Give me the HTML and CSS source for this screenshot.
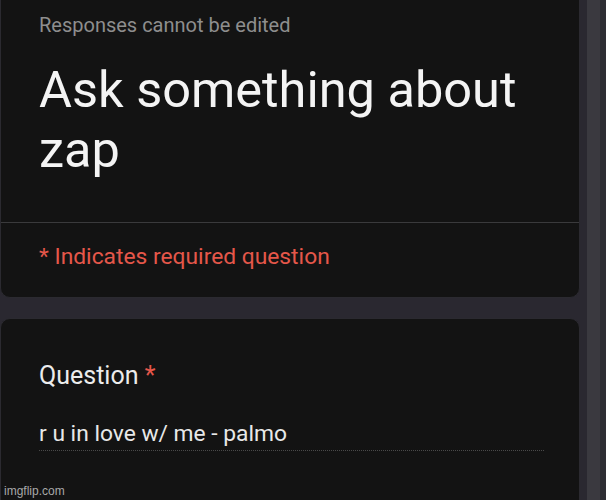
FILE: index.html
```html
<!DOCTYPE html>
<html lang="en">
  <head>
    <meta charset="UTF-8" />
    <meta name="viewport" content="width=device-width, initial-scale=1.0" />
    <title>Ask something about zap</title>
    <link rel="stylesheet" href="styles.css">
  </head>
  <body>
    <div class="screen">
      <div class="main">
        <div class="card card-top">
          <div class="form-head">
            <div class="note">Responses cannot be edited</div>
            <h1 class="title">Ask something about zap</h1>
          </div>
          <div class="required-note">* Indicates required question</div>
        </div>

        <div class="card card-question">
          <div class="question-label">Question <span class="star">*</span></div>
          <div class="answer">r u in love w/ me - palmo</div>
        </div>
      </div>
      <div class="scrollbar"></div>
      <div class="edge"></div>
    </div>
    <div class="watermark">imgflip.com</div>
  </body>
</html>
```

FILE: styles.css
```css
body {
  font-family: "Roboto", "Noto Sans", sans-serif;
  background-color: #2a2830;
  margin: 0;
  padding: 0;
  height: 500px;
  overflow: hidden;
  position: relative;
}

.screen {
  display: flex;
  height: 500px;
}

.main {
  flex: 1;
  padding-right: 7px;
}

.scrollbar {
  width: 13px;
  background-color: #3a393f;
}

.edge {
  width: 6px;
  background-color: #2e2d33;
}

.card {
  background-color: #131313;
  border: 1px solid #2b2a30;
  border-radius: 10px;
}

.card-top {
  margin-top: -12px;
}

.form-head {
  padding: 24px 38px 42px;
  border-bottom: 1px solid #3a3a3c;
}

.note {
  font-size: 20px;
  line-height: 24px;
  color: #8e8e8e;
}

.title {
  margin: 23px 0 0;
  font-size: 50.5px;
  line-height: 60px;
  font-weight: 400;
  color: #f4f4f4;
}

.required-note {
  padding: 20px 38px 26px;
  font-size: 22.8px;
  line-height: 28px;
  color: #e5574a;
}

.card-question {
  margin-top: 20px;
  padding: 42px 35px 60px 38px;
}

.question-label {
  font-size: 25px;
  line-height: 30px;
  color: #ececec;
}

.star {
  color: #e5574a;
}

.answer {
  margin-top: 29px;
  padding-bottom: 2px;
  font-size: 22.8px;
  line-height: 28px;
  color: #e8e8e8;
  border-bottom: 1px dotted #4a4a4a;
}

.watermark {
  position: absolute;
  left: 4px;
  bottom: 2px;
  font-family: "Liberation Sans", Arial, sans-serif;
  font-size: 12px;
  color: #a8a8a8;
}
```
